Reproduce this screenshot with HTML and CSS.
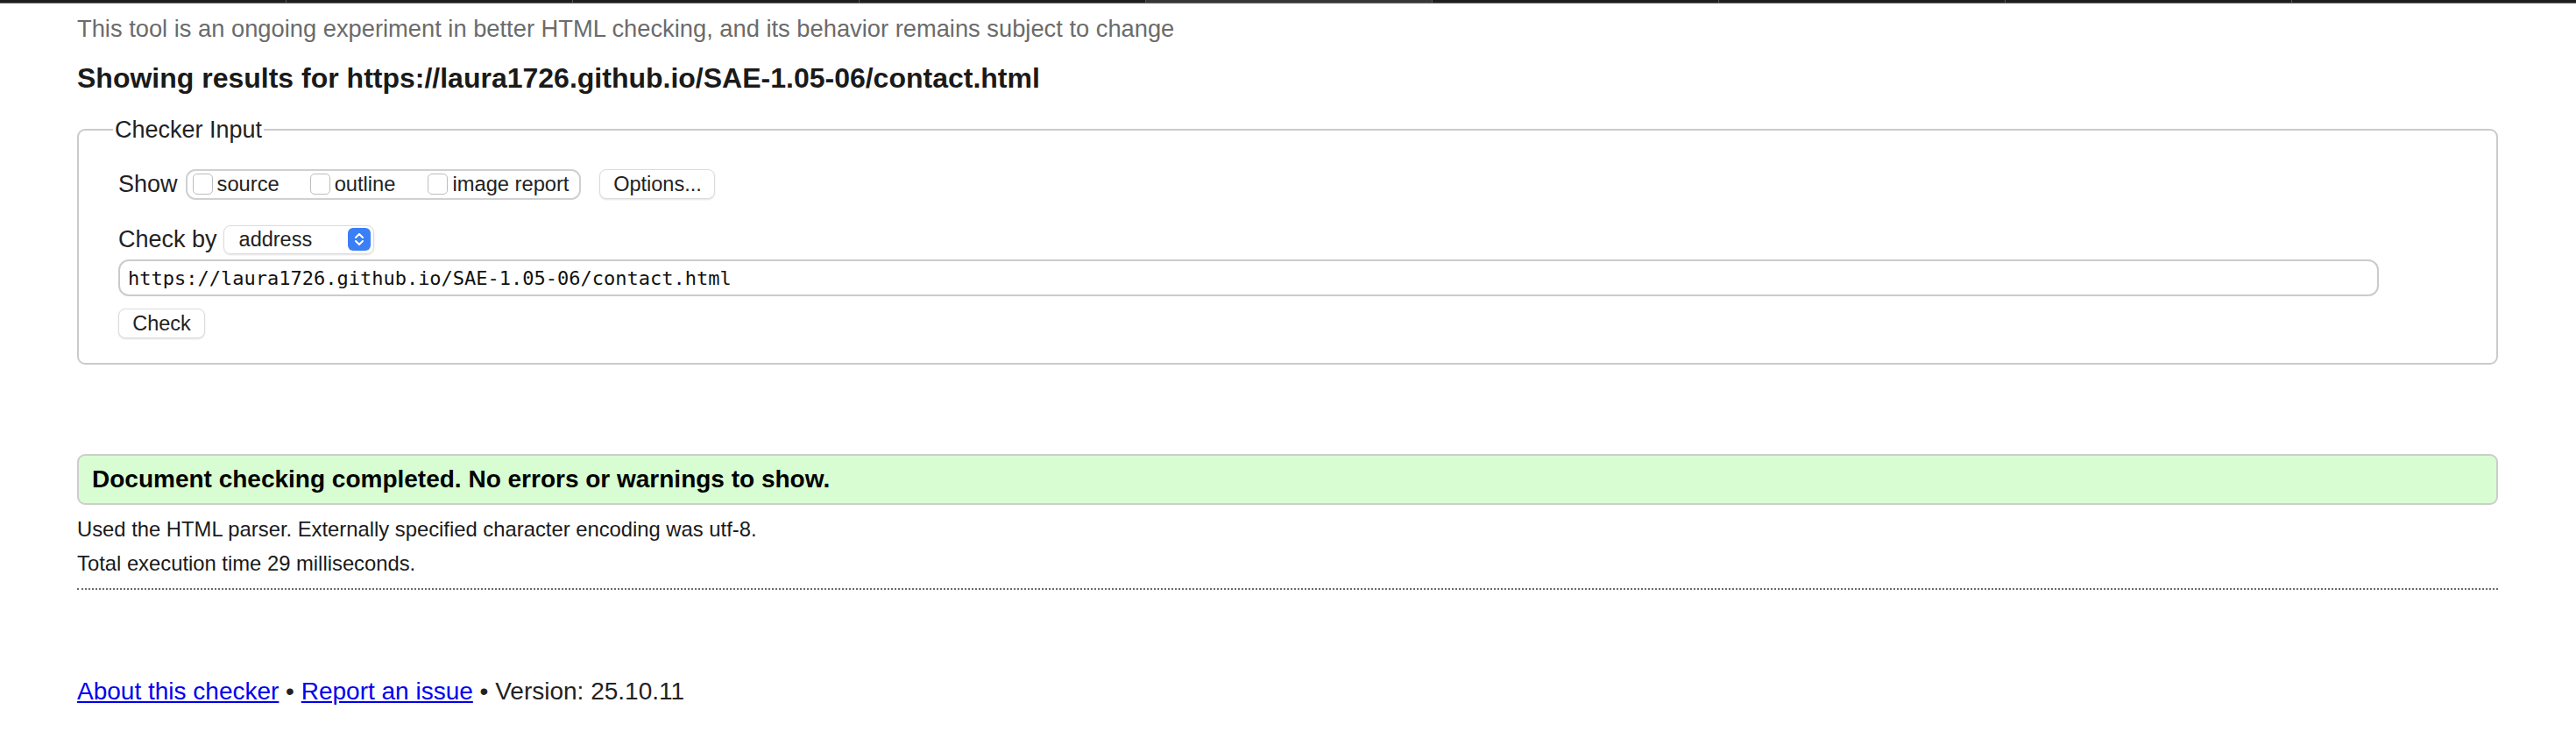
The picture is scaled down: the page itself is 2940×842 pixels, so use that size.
FILE: index.html
```html
<!DOCTYPE html>
<html lang="en">
<head>
<meta charset="utf-8">
<title>Nu Html Checker</title>
<link rel="stylesheet" href="styles.css">
</head>
<body>
<div class="tabbar">
  <span class="tab"></span><span class="tab"></span><span class="tab"></span><span class="tab"></span>
  <span class="tab tab-active"></span><span class="tab"></span><span class="tab"></span><span class="tab"></span><span class="tab tab-last"></span>
</div>
<main class="page">
  <p class="about">This tool is an ongoing experiment in better HTML checking, and its behavior remains subject to change</p>
  <h2 class="results-title">Showing results for https://laura1726.github.io/SAE-1.05-06/contact.html</h2>

  <fieldset class="checker">
    <legend class="checker-legend">Checker Input</legend>
    <div class="row show-row">
      <span class="row-label">Show</span>
      <div class="show-group">
        <label class="opt"><span class="checkbox"></span>source</label>
        <label class="opt opt-outline"><span class="checkbox"></span>outline</label>
        <label class="opt"><span class="checkbox"></span>image report</label>
      </div>
      <span class="btn btn-options">Options...</span>
    </div>
    <div class="row checkby-row">
      <span class="row-label">Check by</span>
      <div class="select">
        <span class="select-text">address</span>
        <span class="stepper">
          <svg width="14" height="20" viewBox="0 0 14 20"><path d="M3 8 L7 4 L11 8" fill="none" stroke="#fff" stroke-width="2" stroke-linecap="round" stroke-linejoin="round"/><path d="M3 12 L7 16 L11 12" fill="none" stroke="#fff" stroke-width="2" stroke-linecap="round" stroke-linejoin="round"/></svg>
        </span>
      </div>
    </div>
    <div class="url-input">https://laura1726.github.io/SAE-1.05-06/contact.html</div>
    <div class="row check-row">
      <span class="btn btn-check">Check</span>
    </div>
  </fieldset>

  <div class="success">Document checking completed. No errors or warnings to show.</div>
  <p class="details details-first">Used the HTML parser. Externally specified character encoding was utf-8.</p>
  <p class="details">Total execution time 29 milliseconds.</p>
  <hr class="dotted">
  <p class="footer"><a href="#">About this checker</a> • <a href="#">Report an issue</a> • Version: 25.10.11</p>
</main>
</body>
</html>
```
FILE: styles.css
```css
html, body {
  margin: 0;
  padding: 0;
  background: #fff;
}
body {
  font-family: "Liberation Sans", Arial, sans-serif;
  color: #222;
}
.tabbar {
  display: flex;
  height: 3px;
  background: #1d1d1d;
  border-bottom: 1px solid #6a6a6a;
}
.tab {
  flex: 0 0 326px;
  border-right: 1px solid #555;
}
.tab-active {
  background: #363636;
}
.tab-last {
  flex: 1 1 auto;
  border-right: none;
}
.page {
  padding: 0 89px 0 88px;
}
.about {
  margin: 13px 0 0;
  font-size: 27.3px;
  line-height: 32px;
  color: #6b6b6b;
}
.results-title {
  margin: 21px 0 0;
  font-size: 32px;
  line-height: 38px;
  font-weight: bold;
  color: #1a1a1a;
}
.checker {
  margin: 24px 0 0;
  padding: 29px 0 28px 45px;
  border: 2px solid #cbcbcb;
  border-radius: 9px;
  min-width: 0;
}
.checker-legend {
  font-size: 27px;
  line-height: 32px;
  padding: 0 2px;
  margin-left: -6px;
  color: #222;
}
.row {
  display: flex;
  align-items: center;
}
.row-label {
  font-size: 27px;
  color: #222;
}
.show-row {
  height: 34px;
}
.show-group {
  margin-left: 9px;
  box-sizing: border-box;
  height: 35px;
  border: 2px solid #d0d0d0;
  border-radius: 11px;
  display: flex;
  align-items: center;
  padding: 0 12px 0 6px;
}
.opt {
  display: flex;
  align-items: center;
  font-size: 23.7px;
  color: #222;
  margin-right: 35px;
}
.opt-outline {
  margin-right: 37px;
}
.opt:last-child {
  margin-right: 0;
}
.checkbox {
  display: inline-block;
  width: 23px;
  height: 24px;
  box-sizing: border-box;
  border: 1.5px solid #bdbdbd;
  border-radius: 5px;
  background: #fff;
  margin-right: 5px;
}
.btn {
  display: inline-flex;
  align-items: center;
  justify-content: center;
  box-sizing: border-box;
  height: 34px;
  background: #fff;
  border: 1px solid #dcdcdc;
  border-radius: 8px;
  box-shadow: 0 1px 2px rgba(0, 0, 0, 0.12);
  font-size: 23.5px;
  color: #222;
}
.btn-options {
  margin-left: 21px;
  width: 132px;
}
.btn-check {
  width: 99px;
}
.checkby-row {
  margin-top: 30px;
  height: 32px;
}
.select {
  margin-left: 7px;
  width: 172px;
  height: 33px;
  box-sizing: border-box;
  border: 1px solid #dcdcdc;
  border-radius: 8px;
  box-shadow: 0 1px 2px rgba(0, 0, 0, 0.12);
  display: flex;
  align-items: center;
  justify-content: space-between;
  padding: 0 3px 0 17px;
}
.select-text {
  font-size: 23.5px;
  color: #222;
}
.stepper {
  width: 26px;
  height: 26px;
  border-radius: 6px;
  background: #3a7ff6;
  display: flex;
  align-items: center;
  justify-content: center;
}
.url-input {
  margin-top: 7px;
  width: 2580px;
  height: 42px;
  box-sizing: border-box;
  border: 2px solid #cbcbcb;
  border-radius: 12px;
  padding: 0 9px;
  display: flex;
  align-items: center;
  font-family: "DejaVu Sans Mono", "Liberation Mono", monospace;
  font-size: 22px;
  color: #111;
}
.check-row {
  margin-top: 14px;
}
.success {
  margin-top: 102px;
  box-sizing: border-box;
  height: 58px;
  border: 2px solid #cdcdcd;
  border-radius: 9px;
  background: #d8fdd3;
  padding: 0 15px;
  font-size: 28px;
  line-height: 54px;
  font-weight: bold;
  color: #000;
}
.details {
  margin: 9px 0 0;
  font-size: 23.8px;
  line-height: 30px;
  color: #1a1a1a;
}
.details-first {
  margin-top: 13px;
}
.dotted {
  margin: 13px 0 0;
  border: none;
  border-top: 2px dotted #6a6a6a;
  height: 0;
}
.footer {
  margin: 99px 0 0;
  font-size: 28px;
  line-height: 34px;
  color: #222;
}
.footer a {
  color: #0000ee;
  text-decoration: underline;
}
```
